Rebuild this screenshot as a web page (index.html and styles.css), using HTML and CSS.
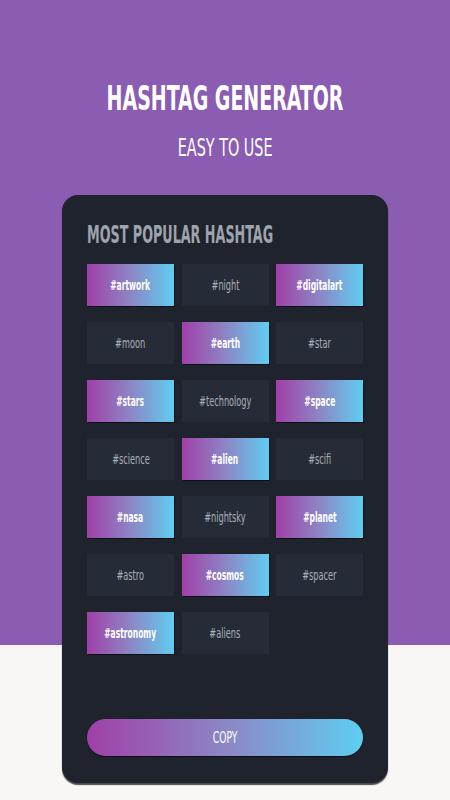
FILE: index.html
```html
<!DOCTYPE html>
<html lang="en">
<head>
    <meta charset="UTF-8">
    <meta name="viewport" content="width=device-width, initial-scale=1.0">
    <title>Hashtag Generator</title>
    <link rel="stylesheet" href="styles.css">
</head>
<body>
    <div class="header">
        <h1><span class="narrow">HASHTAG GENERATOR</span></h1>
        <p><span class="narrow">EASY TO USE</span></p>
    </div>

    <div class="card">
        <h2><span class="narrow">MOST POPULAR HASHTAG</span></h2>

        <div class="tag-grid">
            <div class="tag active"><span class="narrow">#artwork</span></div>
            <div class="tag"><span class="narrow">#night</span></div>
            <div class="tag active"><span class="narrow">#digitalart</span></div>
            <div class="tag"><span class="narrow">#moon</span></div>
            <div class="tag active"><span class="narrow">#earth</span></div>
            <div class="tag"><span class="narrow">#star</span></div>
            <div class="tag active"><span class="narrow">#stars</span></div>
            <div class="tag"><span class="narrow">#technology</span></div>
            <div class="tag active"><span class="narrow">#space</span></div>
            <div class="tag"><span class="narrow">#science</span></div>
            <div class="tag active"><span class="narrow">#alien</span></div>
            <div class="tag"><span class="narrow">#scifi</span></div>
            <div class="tag active"><span class="narrow">#nasa</span></div>
            <div class="tag"><span class="narrow">#nightsky</span></div>
            <div class="tag active"><span class="narrow">#planet</span></div>
            <div class="tag"><span class="narrow">#astro</span></div>
            <div class="tag active"><span class="narrow">#cosmos</span></div>
            <div class="tag"><span class="narrow">#spacer</span></div>
            <div class="tag active"><span class="narrow">#astronomy</span></div>
            <div class="tag"><span class="narrow">#aliens</span></div>
        </div>

        <button class="btn" id="copyBtn"><span class="narrow">COPY</span></button>
    </div>

    <script>
        // Выбор хэштегов
        document.querySelectorAll('.tag').forEach(tag => {
            tag.addEventListener('click', function() {
                this.classList.toggle('active');
            });
        });
    </script>
</body>
</html>
```

FILE: styles.css
```css
* {
    margin: 0;
    padding: 0;
    box-sizing: border-box;
}

body {
    font-family: 'DejaVu Sans Condensed', 'DejaVu Sans', sans-serif;
    font-stretch: condensed;
    background: linear-gradient(to bottom, #8a5cb2 0, #8a5cb2 645px, #f8f7f5 645px);
    min-height: 100vh;
    width: 450px;
}

/* узкий шрифт как в макете */
.narrow {
    display: inline-block;
    white-space: nowrap;
    transform: scaleX(0.64);
}

.header {
    text-align: center;
    color: #fff;
    padding-top: 78px;
    height: 195px;
}

.header h1 {
    font-size: 34px;
    line-height: 40px;
    font-weight: 700;
}

.header h1 .narrow {
    transform: scaleX(0.62);
}

.header p {
    margin-top: 15px;
    font-size: 25px;
    line-height: 30px;
}

.card {
    width: 326px;
    height: 588px;
    margin: 0 auto;
    background: #1e232d;
    border-radius: 16px;
    box-shadow: 0 2px 1px rgba(0,0,0,0.7);
    padding: 25px 25px 27px;
    display: flex;
    flex-direction: column;
}

.card h2 {
    color: #9ea4ad;
    font-size: 24px;
    line-height: 30px;
    font-weight: 700;
    white-space: nowrap;
}

.card h2 .narrow {
    transform: scaleX(0.59);
    transform-origin: left center;
}

.tag-grid {
    margin-top: 14px;
    display: grid;
    grid-template-columns: repeat(3, 1fr);
    column-gap: 7.5px;
    row-gap: 16px;
}

.tag {
    height: 42px;
    background: #262c37;
    color: #a9afb7;
    font-size: 14px;
    display: flex;
    align-items: center;
    justify-content: center;
    cursor: pointer;
}

.tag .narrow {
    transform: scaleX(0.65);
}

.tag.active {
    background: linear-gradient(to right, #a03fa8 0%, #8c86c5 50%, #5fcdf1 100%);
    color: #fff;
    font-weight: 700;
    box-shadow: 1px 1px 0 #0c0f14;
}

.tag.active .narrow {
    transform: scaleX(0.6);
}

.btn {
    margin-top: auto;
    width: 100%;
    height: 37px;
    border: none;
    border-radius: 19px;
    background: linear-gradient(to right, #a03fa8 0%, #8c86c5 50%, #5fcdf1 100%);
    box-shadow: 0 1px 1px rgba(0,0,0,0.6);
    color: #fff;
    font-family: inherit;
    font-size: 15px;
    cursor: pointer;
}

.btn .narrow {
    transform: scaleX(0.68);
}
```
